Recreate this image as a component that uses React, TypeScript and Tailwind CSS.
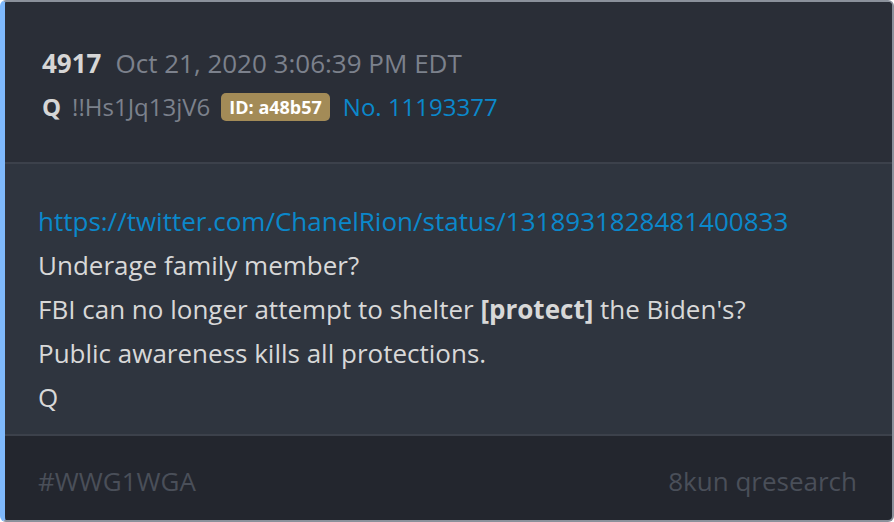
export default function App() {
  return (
    <div className="h-[522px] w-[894px] bg-white font-['Open_Sans',sans-serif]">
      <div className="h-[522px] overflow-hidden rounded-[6px] border-2 border-l-[5px] border-[#8b919b] border-l-[#7fb9fc] bg-[#23262e]">
        {/* header */}
        <div className="bg-[#2a2e37] pl-[37px] pt-[39px] pb-[33px] leading-[44px]">
          <div className="flex items-center gap-[14px] text-[26px]">
            <span className="font-bold text-[#d6d6d6]">4917</span>
            <span className="text-[#7c818c]">Oct 21, 2020 3:06:39 PM EDT</span>
          </div>
          <div className="flex items-center text-[24px]">
            <span className="font-bold text-[#d6d6d6]">Q</span>
            <span className="ml-[11px] text-[#7c818c]">!!Hs1Jq13jV6</span>
            <span className="ml-[11px] rounded-[5px] bg-[#a38b57] px-[8px] text-[18px] leading-[28px] font-bold text-white">
              ID: a48b57
            </span>
            <span className="ml-[13px] text-[#0b88cb]">No. 11193377</span>
          </div>
        </div>

        {/* body */}
        <div className="border-y-2 border-[#3c414b] bg-[#2f353f] pl-[33px] pt-[35px] pb-[15px] text-[26px] leading-[44px] text-[#d8d8d8]">
          <div className="text-[#0b88cb]">https://twitter.com/ChanelRion/status/1318931828481400833</div>
          <div>Underage family member?</div>
          <div>
            FBI can no longer attempt to shelter <span className="font-bold">[protect]</span> the Biden's?
          </div>
          <div>Public awareness kills all protections.</div>
          <div>Q</div>
        </div>

        {/* footer */}
        <div className="flex justify-between pl-[33px] pr-[35px] pt-[23px] text-[26px] leading-[44px] text-[#4a4f59]">
          <span>#WWG1WGA</span>
          <span>8kun qresearch</span>
        </div>
      </div>
    </div>
  );
}
